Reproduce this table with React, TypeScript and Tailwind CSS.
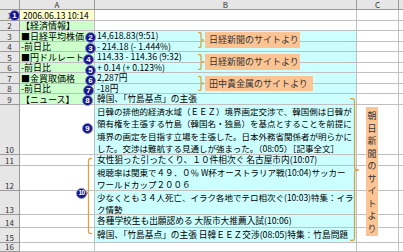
import React from 'react';

type Row = {
  n: string;
  h: string;
  a?: React.ReactNode;
  aBg: string;
  b?: React.ReactNode;
  bBg: string;
};

const rows: Row[] = [
  { n: '1', h: 'h-[11px]', a: <span className="pl-[2px] text-[8.5px]">2006.06.13 10:14</span>, aBg: 'bg-[#ffffcc]', bBg: 'bg-white' },
  { n: '2', h: 'h-[10px]', a: '【経済情報】', aBg: 'bg-[#ccffcc]', bBg: 'bg-white' },
  { n: '3', h: 'h-[11px]', a: '■日経平均株価', aBg: 'bg-[#ccffcc]', b: '14,618.83(9:51)', bBg: 'bg-[#ccffff]' },
  { n: '4', h: 'h-[10px]', a: '-前日比', aBg: 'bg-[#ccffcc]', b: '- 214.18 (- 1.444%)', bBg: 'bg-[#ccffff]' },
  { n: '5', h: 'h-[11px]', a: '■円ドルレート', aBg: 'bg-[#ccffcc]', b: '114.33 - 114.36 (9:32)', bBg: 'bg-[#ccffff]' },
  { n: '6', h: 'h-[10px]', a: '-前日比', aBg: 'bg-[#ccffcc]', b: '+ 0.14 (+ 0.123%)', bBg: 'bg-[#ccffff]' },
  { n: '7', h: 'h-[11px]', a: '■金買取価格', aBg: 'bg-[#ccffcc]', b: '2,287円', bBg: 'bg-[#ccffff]' },
  { n: '8', h: 'h-[10px]', a: '-前日比', aBg: 'bg-[#ccffcc]', b: '-18円', bBg: 'bg-[#ccffff]' },
  { n: '9', h: 'h-[11px]', a: '【ニュース】', aBg: 'bg-[#ccffcc]', b: '韓国、「竹島基点」の主張', bBg: 'bg-[#ccffff]' },
  {
    n: '10',
    h: 'h-[50px]',
    aBg: 'bg-white',
    b: [
      '日韓の排他的経済水域（ＥＥＺ）境界画定交渉で、韓国側は日韓が',
      '領有権を主張する竹島（韓国名・独島）を基点とすることを前提に',
      '境界の画定を目指す立場を主張した。日本外務省関係者が明らかに',
      'した。交渉は難航する見通しが強まった。（08:05）［記事全文］',
    ],
    bBg: 'bg-[#ccffff]',
  },
  { n: '11', h: 'h-[11px]', aBg: 'bg-white', b: '女性狙った引ったくり、１０件相次ぐ 名古屋市内(10:07)', bBg: 'bg-[#ccffff]' },
  {
    n: '12',
    h: 'h-[25px]',
    aBg: 'bg-white',
    b: ['視聴率は関東で４９．０％ W杯オーストラリア戦(10:04)サッカー', 'ワールドカップ２００６'],
    bBg: 'bg-[#ccffff]',
  },
  {
    n: '13',
    h: 'h-[24px]',
    aBg: 'bg-white',
    b: ['少なくとも３４人死亡、イラク各地でテロ相次ぐ(10:03)特集：イラ', 'ク情勢'],
    bBg: 'bg-[#ccffff]',
  },
  { n: '14', h: 'h-[13px]', aBg: 'bg-white', b: '各種学校生も出願認める 大阪市大推薦入試(10:06)', bBg: 'bg-[#ccffff]' },
  { n: '15', h: 'h-[15px]', aBg: 'bg-white', b: '韓国、「竹島基点」の主張 日韓ＥＥＺ交渉(08:05)特集：竹島問題', bBg: 'bg-[#ccffff]' },
  { n: '16', h: 'h-[9px]', aBg: 'bg-white', bBg: 'bg-white' },
];

function Brace({ w, h, left = false, mid }: { w: number; h: number; left?: boolean; mid?: number }) {
  const m = mid ?? h / 2;
  const r = Math.min(4, h / 6);
  const x = (v: number) => (left ? w - v : v);
  const c = w / 2;
  const d = `M ${x(0)} 0.5 C ${x(c)} 0.5, ${x(c)} 0.5, ${x(c)} ${r} L ${x(c)} ${m - r} C ${x(c)} ${m}, ${x(c)} ${m}, ${x(w)} ${m} C ${x(c)} ${m}, ${x(c)} ${m}, ${x(c)} ${m + r} L ${x(c)} ${h - r} C ${x(c)} ${h - 0.5}, ${x(c)} ${h - 0.5}, ${x(0)} ${h - 0.5}`;
  return (
    <svg width={w} height={h} viewBox={`0 0 ${w} ${h}`}>
      <path d={d} fill="none" stroke="#d9a245" strokeWidth="1.3" />
    </svg>
  );
}

function Num({ n, className }: { n: string; className: string }) {
  return (
    <div
      className={`absolute w-[11px] h-[11px] rounded-full bg-[#16168a] border border-[#8888cc] text-white font-bold leading-none flex items-center justify-center font-['Liberation_Sans',sans-serif] ${
        n.length > 1 ? 'text-[6.5px] tracking-[-0.5px]' : 'text-[8px]'
      } ${className}`}
    >
      {n}
    </div>
  );
}

export default function App() {
  const vertical = '朝日新聞のサイトより'.split('');

  return (
    <div className="relative w-[403px] h-[252px] overflow-hidden bg-white font-['Noto_Sans_CJK_JP','Noto_Sans',sans-serif] text-black">
      {/* column header */}
      <div className="flex h-[10px] text-[8px] leading-[10px] text-[#333]">
        <div className="w-[20px] shrink-0 bg-[#e6e6e6] border-r border-b border-[#9a9a9a]" />
        <div className="w-[75px] shrink-0 bg-[#e6e6e6] border-r border-b border-[#9a9a9a] text-center">A</div>
        <div className="w-[262px] shrink-0 bg-[#e6e6e6] border-r border-b border-[#9a9a9a] text-center">B</div>
        <div className="w-[42px] shrink-0 bg-[#e6e6e6] border-r border-b border-[#9a9a9a] text-center">C</div>
        <div className="flex-1 bg-[#e6e6e6] border-b border-[#9a9a9a]" />
      </div>

      {rows.map((r) => (
        <div key={r.n} className={`flex ${r.h}`}>
          <div className="w-[20px] shrink-0 bg-[#e6e6e6] border-r border-b border-[#9a9a9a] text-[8px] leading-[8px] text-[#333] flex items-end justify-center overflow-hidden">
            {r.n}
          </div>
          <div className={`w-[75px] shrink-0 ${r.aBg} border-r border-b border-[#c0c0c0] text-[9px] leading-[9px] flex items-center pl-[1px] whitespace-nowrap`}>
            {r.a}
          </div>
          <div className={`w-[262px] shrink-0 ${r.bBg} border-r border-b border-[#c0c0c0] pl-[2px] whitespace-nowrap ${Array.isArray(r.b) ? 'flex flex-col justify-center' : 'flex items-center'}`}>
            {Array.isArray(r.b) ? (
              r.b.map((line) => (
                <div key={line} className={`text-[8.5px] ${r.n === '10' ? 'leading-[12.5px]' : 'leading-[12px]'}`}>
                  {line}
                </div>
              ))
            ) : (
              <span className="text-[8.7px] leading-[10px]">{r.b}</span>
            )}
          </div>
          <div className="w-[42px] shrink-0 bg-white border-r border-b border-[#c0c0c0]" />
          <div className="flex-1 bg-white border-b border-[#c0c0c0]" />
        </div>
      ))}

      {/* callouts */}
      <div className="absolute left-[198px] top-[32px]"><Brace w={6} h={16} /></div>
      <div className="absolute left-[205px] top-[32px] w-[95px] h-[16px] bg-[#fcc493] text-[9px] text-[#333] flex items-center pl-[4px]">日経新聞のサイトより</div>

      <div className="absolute left-[198px] top-[54px]"><Brace w={6} h={16} /></div>
      <div className="absolute left-[205px] top-[54px] w-[95px] h-[16px] bg-[#fcc493] text-[9px] text-[#333] flex items-center pl-[4px]">日経新聞のサイトより</div>

      <div className="absolute left-[198px] top-[76px]"><Brace w={6} h={15} /></div>
      <div className="absolute left-[205px] top-[76px] w-[108px] h-[15px] bg-[#fcc493] text-[9px] text-[#333] flex items-center pl-[4px]">田中貴金属のサイトより</div>

      <div className="absolute left-[350px] top-[98px]"><Brace w={9} h={143} mid={72} /></div>
      <div className="absolute left-[366px] top-[107px] w-[12px] h-[129px] bg-[#fcc493] text-[9px] leading-[12.5px] text-[#333] flex flex-col items-center pt-[3px]">
        {vertical.map((ch, i) => (
          <span key={i}>{ch}</span>
        ))}
      </div>

      <div className="absolute left-[85px] top-[158px]"><Brace w={7} h={76} left mid={35} /></div>

      {/* numbered markers */}
      <Num n="1" className="left-[9px] top-[10px]" />
      <Num n="2" className="left-[85px] top-[32px]" />
      <Num n="3" className="left-[85px] top-[43px]" />
      <Num n="4" className="left-[83px] top-[54px]" />
      <Num n="5" className="left-[85px] top-[65px]" />
      <Num n="6" className="left-[85px] top-[75px]" />
      <Num n="7" className="left-[83px] top-[85px]" />
      <Num n="8" className="left-[82px] top-[95px]" />
      <Num n="9" className="left-[82px] top-[123px]" />
      <Num n="10" className="left-[76px] top-[188px]" />
    </div>
  );
}
